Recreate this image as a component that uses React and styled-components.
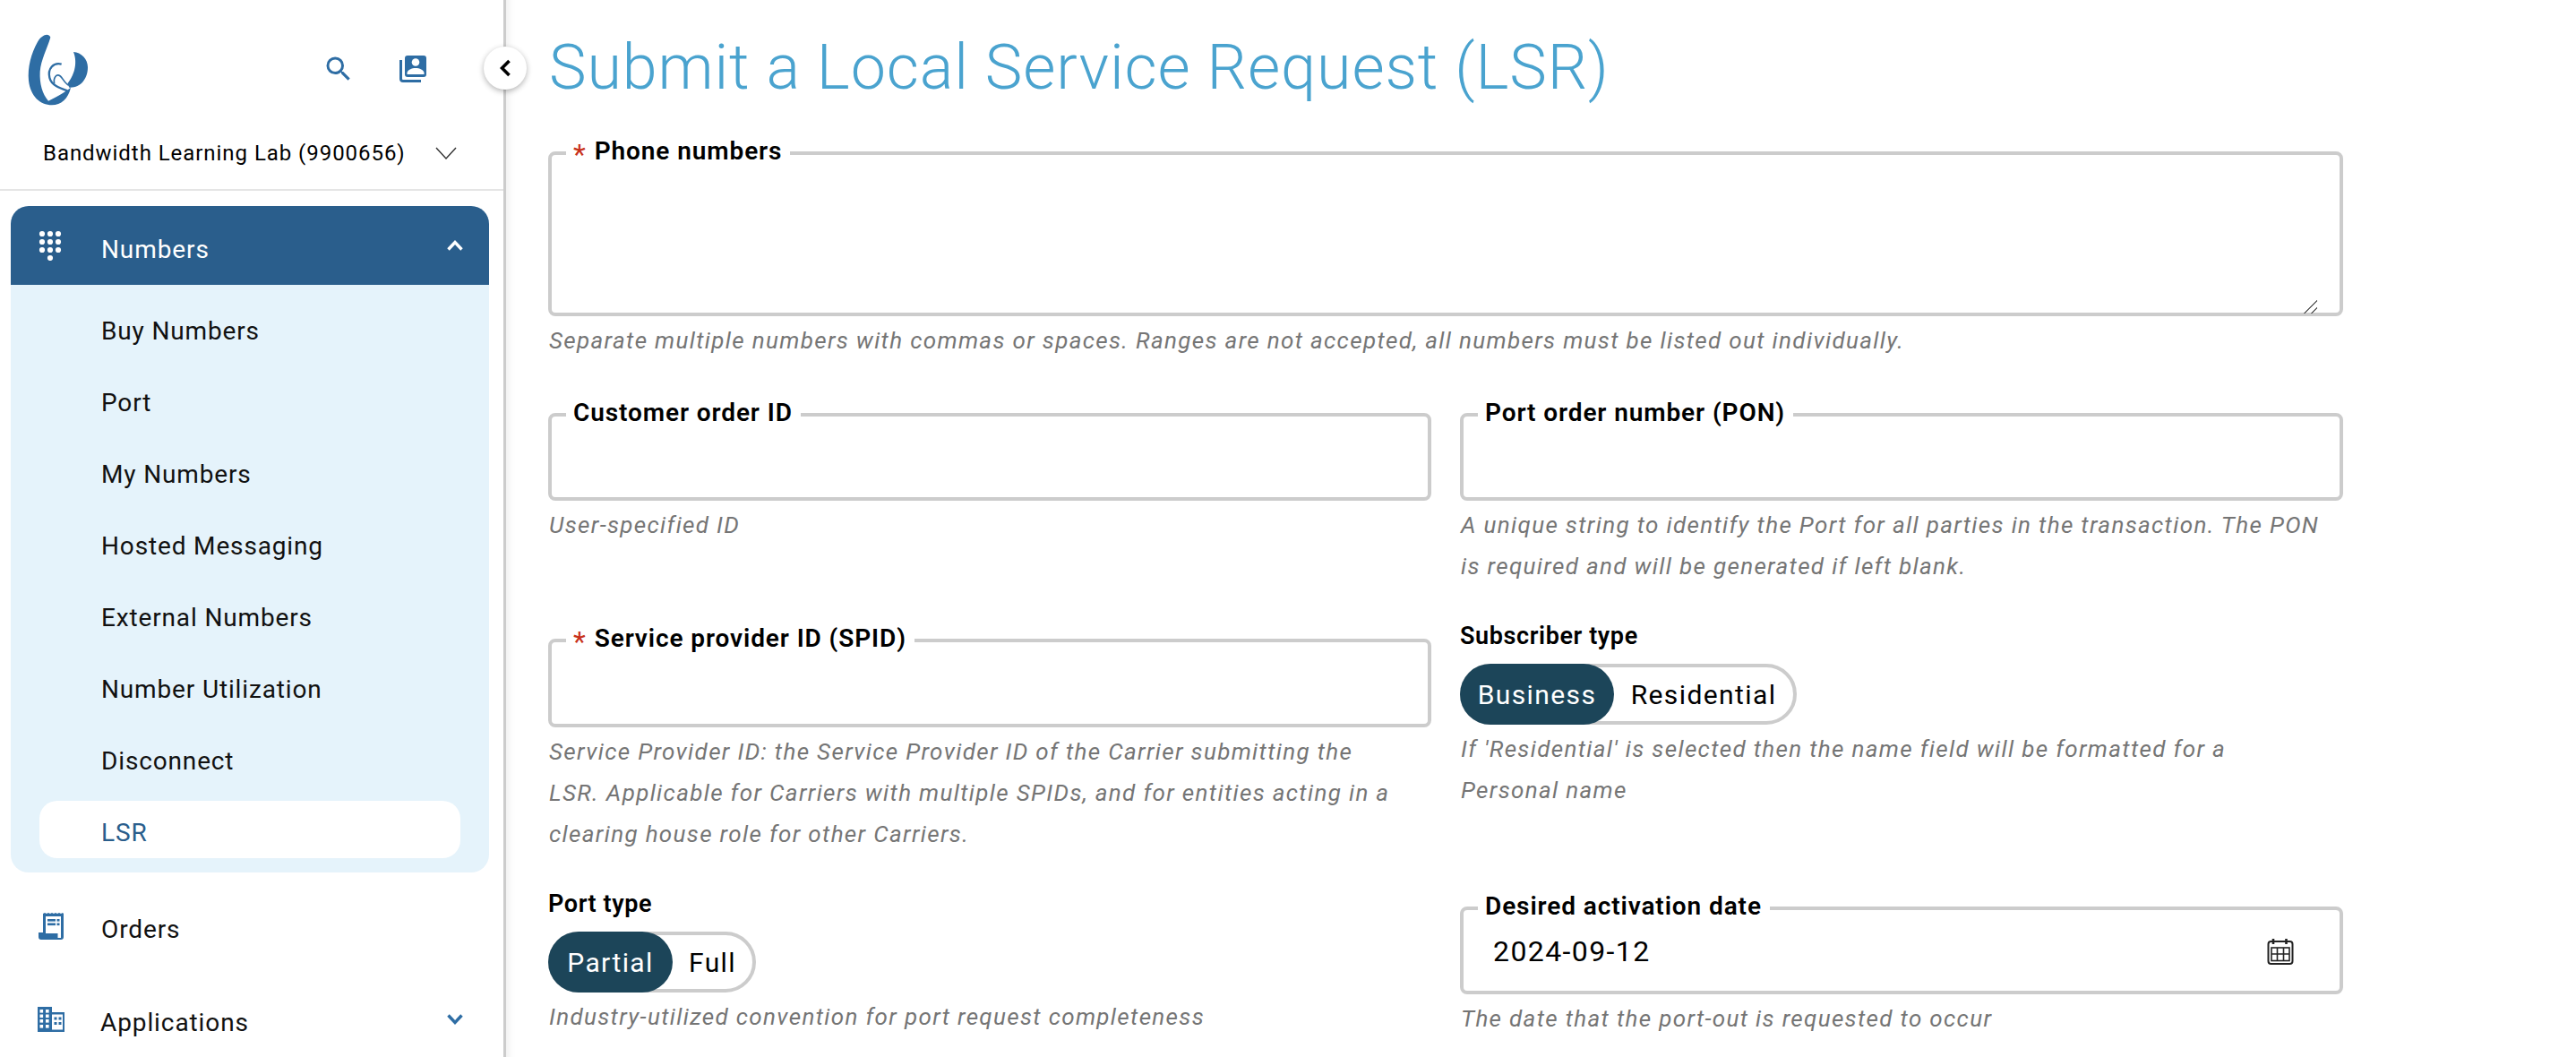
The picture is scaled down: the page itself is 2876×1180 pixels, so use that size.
import React from "react";
import styled, { createGlobalStyle } from "styled-components";
import { MdSearch } from "react-icons/md";

const Global = createGlobalStyle`
  html, body { margin: 0; height: 100%; overflow: hidden; background: #fff; }
  body { font-family: Roboto, "Liberation Sans", sans-serif; color: #000; }
  * { box-sizing: border-box; }
`;

const Page = styled.div`
  display: flex;
  height: 1180px;
  width: 2876px;
  overflow: hidden;
`;

const Sidebar = styled.aside`
  position: relative;
  flex: 0 0 565px;
  border-right: 3px solid #ccc;
  display: flex;
  flex-direction: column;
`;

const Header = styled.div`
  flex: none;
  height: 213px;
  border-bottom: 2px solid #e5e5e5;
  display: flex;
  flex-direction: column;
`;

const TopRow = styled.div`
  display: flex;
  align-items: flex-start;
  padding: 38px 0 0 32px;
  height: 141px;
`;

const IconLink = styled.span`
  display: inline-flex;
  color: #2e6da4;
`;

const TopIcons = styled.div`
  margin-left: auto;
  display: flex;
  align-items: center;
  gap: 50px;
  padding: 21px 86px 0 0;
`;

const Account = styled.div`
  display: flex;
  align-items: center;
  justify-content: space-between;
  padding: 0 52px 0 48px;
  height: 60px;
  font-size: 24px;
  letter-spacing: 0.95px;
`;

const CollapseButton = styled.button`
  position: absolute;
  top: 52px;
  right: -26px;
  width: 48px;
  height: 48px;
  border-radius: 50%;
  border: none;
  background: #fff;
  box-shadow: 0 2px 6px rgba(0, 0, 0, 0.3);
  display: flex;
  align-items: center;
  justify-content: center;
  padding: 0;
`;

const Nav = styled.nav`
  flex: none;
  padding: 17px 16px 0 12px;
  display: flex;
  flex-direction: column;
`;

const OpenGroup = styled.div`
  border-radius: 20px;
  overflow: hidden;
  background: #e5f3fb;
`;

const GroupHead = styled.div`
  height: 88px;
  background: #2a5e8c;
  color: #fff;
  display: flex;
  align-items: center;
  padding: 0 29px 0 31px;
  font-size: 28px;
  letter-spacing: 0.9px;
`;

const RowLabel = styled.span`
  padding-top: ${(p) => p.$drop}px;
`;

const IconSlot = styled.span`
  flex: 0 0 70px;
  display: flex;
  align-items: center;
  margin-left: ${(p) => p.$shift || 0}px;
`;

const SubList = styled.div`
  display: flex;
  flex-direction: column;
  gap: 16px;
  padding: 16px 32px;
`;

const SubItem = styled.a`
  height: 64px;
  border-radius: 20px;
  display: flex;
  align-items: center;
  padding: 6px 0 0 69px;
  font-size: 28px;
  letter-spacing: 0.85px;
  color: ${(p) => (p.$active ? "#2a5e8c" : "#111")};
  background: ${(p) => (p.$active ? "#fff" : "transparent")};
`;

const NavRow = styled.div`
  height: ${(p) => p.$h}px;
  display: flex;
  align-items: center;
  padding: 0 29px 0 31px;
  font-size: 28px;
  letter-spacing: 0.9px;
  color: #111;
`;

const Grow = styled.span`
  flex: 1;
`;

const Main = styled.main`
  flex: 1;
  padding: 0 260px 0 47px;
  box-shadow: inset 12px 0 10px -10px rgba(0, 0, 0, 0.08);
  display: flex;
  flex-direction: column;
`;

const Title = styled.h1`
  margin: 0;
  height: 155px;
  padding-top: 31px;
  padding-left: 1px;
  font-size: 70px;
  line-height: 88px;
  font-weight: 300;
  letter-spacing: 0.9px;
  color: #4aa3cf;
`;

const Form = styled.form`
  display: grid;
  grid-template-columns: 986px 986px;
  column-gap: 32px;
  row-gap: 44px;
`;

const Cell = styled.div`
  grid-column: ${(p) => (p.$wide ? "1 / span 2" : "auto")};
  min-width: 0;
`;

const Box = styled.fieldset`
  margin: 0;
  min-width: 0;
  border: 4px solid #ccc;
  border-radius: 8px;
  padding: 0 25px 0 24px;
  display: block;
`;

const Legend = styled.legend`
  margin-left: -8px;
  padding: 0 9px 0 8px;
  height: 32px;
  line-height: 28px;
  font-size: 28px;
  font-weight: 600;
  letter-spacing: 0.9px;
  white-space: nowrap;
`;

const Star = styled.span`
  color: #c8321a;
  font-weight: 400;
  font-size: 32px;
  line-height: 0;
  vertical-align: -5px;
  margin-right: 9px;
`;

const TextArea = styled.textarea`
  display: block;
  width: 100%;
  height: 163px;
  border: none;
  outline: none;
  padding: 0;
  margin: 0 0 -1px;
  resize: vertical;
  background: transparent;

  &::-webkit-resizer {
    background: linear-gradient(
      135deg,
      transparent 47%,
      #666 47%,
      #666 54%,
      transparent 54%,
      transparent 76%,
      #666 76%,
      #666 83%,
      transparent 83%
    );
  }
`;

const InputBody = styled.div`
  height: ${(p) => p.$h}px;
  display: flex;
  align-items: center;
  justify-content: space-between;
  font-size: 32px;
  letter-spacing: 1.4px;
  padding: 0 26px 12px 9px;
`;

const Help = styled.p`
  margin: 4px 0 0;
  padding-left: 1px;
  font-size: 26px;
  line-height: 46px;
  font-style: italic;
  letter-spacing: 1.34px;
  color: #757575;
  white-space: nowrap;
`;

const FieldLabel = styled.div`
  height: 22px;
  line-height: 22px;
  margin-bottom: 20px;
  font-size: 27px;
  font-weight: 600;
  letter-spacing: 0.6px;
`;

const Toggle = styled.div`
  display: inline-flex;
  height: 68px;
  border: 4px solid #ccc;
  border-radius: 34px;
  vertical-align: top;
`;

const ToggleOption = styled.span`
  width: ${(p) => p.$w}px;
  margin: ${(p) => (p.$on ? "-4px 0 -4px -4px" : "0")};
  border-radius: 34px;
  display: flex;
  align-items: center;
  justify-content: center;
  font-size: 30px;
  letter-spacing: 1.4px;
  background: ${(p) => (p.$on ? "#1c4559" : "transparent")};
  color: ${(p) => (p.$on ? "#fff" : "#000")};
`;

const ToggleWrap = styled.div`
  height: 68px;
`;

const LogoMark = styled.svg`
  margin: -8px 0 0 -14px;
  fill: #2e6da4;
`;

const Logo = () => (
  <LogoMark width="100" height="100" viewBox="0 0 300 300">
    <path d="M115 35C108 18 85 28 72 50C50 90 38 135 42 180C48 232 80 262 120 262C150 262 175 240 183 203C170 215 140 232 108 248C88 225 78 190 80 150C83 110 105 70 115 35Z" />
    <path d="M192 84C218 85 240 108 240 135C240 175 215 205 178 203L172 190C192 165 208 125 192 84Z" />
    <path d="M152 125C125 118 105 140 112 170C118 195 145 205 172 214" fill="none" stroke="#2e6da4" strokeWidth="7" />
    <path d="M128 190C124 170 135 155 148 165C156 172 164 190 176 196" fill="none" stroke="#2e6da4" strokeWidth="5" />
  </LogoMark>
);

const ContactsIcon = () => (
  <svg width="30" height="30" viewBox="0 0 30 30">
    <path d="M1.5 5V26Q1.5 28.5 4 28.5H24" fill="none" stroke="#2e6da4" strokeWidth="3" />
    <rect x="6" y="0" width="24" height="24" rx="3" fill="#2e6da4" />
    <circle cx="18" cy="7.5" r="4.3" fill="#fff" />
    <path d="M8.5 21V19.5C8.5 16 14 14 18 14S27.5 16 27.5 19.5V21Z" fill="#fff" />
  </svg>
);

const KeypadIcon = () => (
  <svg width="26" height="34" viewBox="0 0 26 34" fill="#fff">
    {[0, 1, 2].map((r) =>
      [0, 1, 2].map((c) => <circle key={`${r}${c}`} cx={4 + c * 9} cy={4 + r * 9} r="3.1" />)
    )}
    <circle cx="13" cy="31" r="3.1" />
  </svg>
);

const OrdersIcon = () => (
  <svg width="28" height="30" viewBox="0 0 28 30" fill="#2e6da4">
    <path d="M5 1L7 0L9 1L11 0L13 1L15 0L17 1L19 0L21 1L23 0L25 1L27 0L28 1V27Q28 30 25 30H3Q0 30 0 27V22H5Z" />
    <rect x="8" y="4" width="17" height="19" fill="#fff" />
    <rect x="10" y="7" width="9" height="2.6" />
    <rect x="20.5" y="7" width="3" height="2.6" />
    <rect x="10" y="11.5" width="9" height="2.6" />
    <rect x="20.5" y="11.5" width="3" height="2.6" />
    <rect x="21.5" y="22" width="3.5" height="6" fill="#fff" />
  </svg>
);

const BuildingIcon = () => (
  <svg width="30" height="28" viewBox="0 0 30 28" fill="#2e6da4">
    <rect x="0" y="0" width="16" height="28" />
    <rect x="14" y="6" width="16" height="22" />
    <rect x="16" y="8.5" width="12" height="17" fill="#fff" />
    {[3, 8.5, 14, 20].map((y) =>
      [2.5, 9].map((x) => <rect key={`${x}${y}`} x={x} y={y} width="3.6" height="3.6" fill="#fff" />)
    )}
    {[11.5, 17].map((y) =>
      [18.5, 23.5].map((x) => <rect key={`${x}${y}`} x={x} y={y} width="3" height="3" />)
    )}
  </svg>
);

const CalendarIcon = () => (
  <svg width="30" height="30" viewBox="0 0 30 30" fill="none" stroke="#222" strokeWidth="2">
    <rect x="1.5" y="4" width="27" height="25" rx="3" />
    <rect x="5" y="11" width="20" height="14.5" strokeWidth="1.6" />
    <path d="M11.5 11V25.5M18.5 11V25.5M5 18H25" strokeWidth="1.6" />
    <path d="M7 1V7M21.5 1V7" strokeWidth="2.6" />
  </svg>
);

const Chevron = ({ up, color, w = 18, sw = 3.4 }) => (
  <svg width={w} height="12" viewBox="0 0 18 12" fill="none" stroke={color} strokeWidth={sw}>
    <path d={up ? "M1.5 10.5L9 2.5L16.5 10.5" : "M1.5 1.5L9 9.5L16.5 1.5"} />
  </svg>
);

const subItems = [
  "Buy Numbers",
  "Port",
  "My Numbers",
  "Hosted Messaging",
  "External Numbers",
  "Number Utilization",
  "Disconnect",
  "LSR",
];

const Choice = ({ options }) => (
  <ToggleWrap>
    <Toggle>
      {options.map((o) => (
        <ToggleOption key={o.label} $on={o.on} $w={o.w}>
          {o.label}
        </ToggleOption>
      ))}
    </Toggle>
  </ToggleWrap>
);

export default function App() {
  return (
    <Page>
      <Global />
      <Sidebar>
        <Header>
          <TopRow>
            <Logo />
            <TopIcons>
              <IconLink>
                <MdSearch size={36} />
              </IconLink>
              <IconLink>
                <ContactsIcon />
              </IconLink>
            </TopIcons>
          </TopRow>
          <Account>
            <span>Bandwidth Learning Lab (9900656)</span>
            <svg width="24" height="14" viewBox="0 0 24 14" fill="none" stroke="#333" strokeWidth="1.4">
              <path d="M1 1L12 13L23 1" />
            </svg>
          </Account>
        </Header>
        <CollapseButton aria-label="Collapse">
          <svg width="12" height="20" viewBox="0 0 12 20" fill="none" stroke="#000" strokeWidth="3.6">
            <path d="M10.5 2L2.5 10L10.5 18" />
          </svg>
        </CollapseButton>
        <Nav>
          <OpenGroup>
            <GroupHead>
              <IconSlot>
                <KeypadIcon />
              </IconSlot>
              <RowLabel $drop={8}>Numbers</RowLabel>
              <Grow />
              <Chevron up color="#fff" />
            </GroupHead>
            <SubList>
              {subItems.map((s) => (
                <SubItem key={s} $active={s === "LSR"}>
                  {s}
                </SubItem>
              ))}
            </SubList>
          </OpenGroup>
          <NavRow $h={120}>
            <IconSlot>
              <OrdersIcon />
            </IconSlot>
            <RowLabel $drop={6}>Orders</RowLabel>
          </NavRow>
          <NavRow $h={88}>
            <IconSlot $shift={-1}>
              <BuildingIcon />
            </IconSlot>
            <RowLabel $drop={6}>Applications</RowLabel>
            <Grow />
            <Chevron color="#2e6da4" />
          </NavRow>
        </Nav>
      </Sidebar>
      <Main>
        <Title>Submit a Local Service Request (LSR)</Title>
        <Form>
          <Cell $wide>
            <Box>
              <Legend>
                <Star>*</Star>Phone numbers
              </Legend>
              <TextArea />
            </Box>
            <Help>
              Separate multiple numbers with commas or spaces. Ranges are not accepted, all numbers must be listed out individually.
            </Help>
          </Cell>
          <Cell>
            <Box>
              <Legend>Customer order ID</Legend>
              <InputBody $h={76} />
            </Box>
            <Help>User-specified ID</Help>
          </Cell>
          <Cell>
            <Box>
              <Legend>Port order number (PON)</Legend>
              <InputBody $h={76} />
            </Box>
            <Help>
              A unique string to identify the Port for all parties in the transaction. The PON
              <br />
              is required and will be generated if left blank.
            </Help>
          </Cell>
          <Cell>
            <Box>
              <Legend>
                <Star>*</Star>Service provider ID (SPID)
              </Legend>
              <InputBody $h={77} />
            </Box>
            <Help>
              Service Provider ID: the Service Provider ID of the Carrier submitting the
              <br />
              LSR. Applicable for Carriers with multiple SPIDs, and for entities acting in a
              <br />
              clearing house role for other Carriers.
            </Help>
          </Cell>
          <Cell>
            <FieldLabel>Subscriber type</FieldLabel>
            <Choice
              options={[
                { label: "Business", on: true, w: 172 },
                { label: "Residential", w: 200 },
              ]}
            />
            <Help>
              If 'Residential' is selected then the name field will be formatted for a
              <br />
              Personal name
            </Help>
          </Cell>
          <Cell>
            <FieldLabel>Port type</FieldLabel>
            <Choice
              options={[
                { label: "Partial", on: true, w: 139 },
                { label: "Full", w: 89 },
              ]}
            />
            <Help>Industry-utilized convention for port request completeness</Help>
          </Cell>
          <Cell>
            <Box>
              <Legend>Desired activation date</Legend>
              <InputBody $h={76}>
                <span>2024-09-12</span>
                <CalendarIcon />
              </InputBody>
            </Box>
            <Help>The date that the port-out is requested to occur</Help>
          </Cell>
        </Form>
      </Main>
    </Page>
  );
}
